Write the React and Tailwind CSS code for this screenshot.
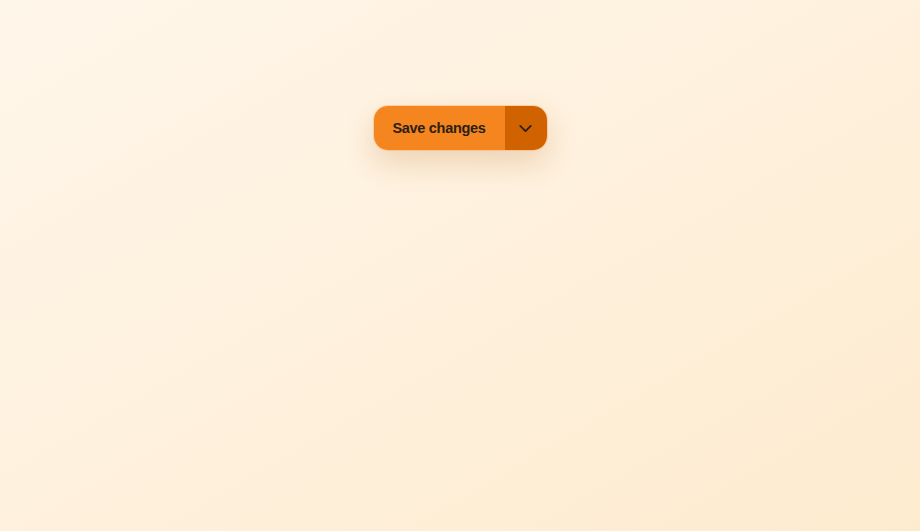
import { ChevronDown } from 'lucide-react';

export default function App() {
  return (
    <div className="min-h-[531px] w-full bg-gradient-to-br from-[#fff6ea] to-[#fdebcf] flex justify-center items-start pt-[106px] font-['Liberation_Sans',Arial,sans-serif]">
      <div className="flex h-[44px] rounded-[14px] overflow-hidden shadow-[0_12px_30px_rgba(180,110,30,0.24)] ring-1 ring-[#f7a45a]/40">
        <button
          type="button"
          className="h-full w-[131px] pt-[2px] bg-[#f5851f] text-[#2b2014] text-[14.5px] tracking-[-0.3px] font-bold whitespace-nowrap flex items-center justify-center"
        >
          Save changes
        </button>
        <button
          type="button"
          className="h-full w-[42px] bg-[#d06300] text-[#2b2014] flex items-center justify-center pt-[1px]"
          aria-label="More options"
        >
          <ChevronDown size={21} strokeWidth={2.1} />
        </button>
      </div>
    </div>
  );
}
